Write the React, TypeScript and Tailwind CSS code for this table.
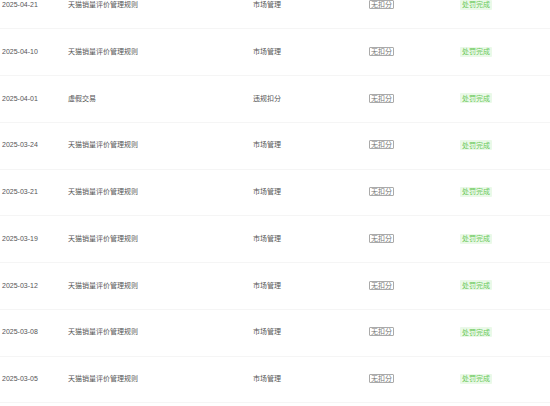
import React from "react"

const rows = [
  { date: "2025-04-21", rule: "天猫销量评价管理规则", type: "市场管理" },
  { date: "2025-04-10", rule: "天猫销量评价管理规则", type: "市场管理" },
  { date: "2025-04-01", rule: "虚假交易", type: "违规扣分" },
  { date: "2025-03-24", rule: "天猫销量评价管理规则", type: "市场管理" },
  { date: "2025-03-21", rule: "天猫销量评价管理规则", type: "市场管理" },
  { date: "2025-03-19", rule: "天猫销量评价管理规则", type: "市场管理" },
  { date: "2025-03-12", rule: "天猫销量评价管理规则", type: "市场管理" },
  { date: "2025-03-08", rule: "天猫销量评价管理规则", type: "市场管理" },
  { date: "2025-03-05", rule: "天猫销量评价管理规则", type: "市场管理" },
]

export default function App() {
  return (
    <div
      className="w-[550px] h-[406px] overflow-hidden bg-white text-[7px] text-[#555]"
      style={{ fontFamily: '"Liberation Sans", "Noto Sans CJK SC", sans-serif' }}
    >
      <div className="-mt-[17.4px]">
        {rows.map((r, i) => (
          <div
            key={i}
            className="flex items-center h-[46.75px] border-b border-[#f5f5f5]"
          >
            <div className="w-[68px] pl-[2px]">{r.date}</div>
            <div className="w-[185px]">{r.rule}</div>
            <div className="w-[116px]">{r.type}</div>
            <div className="w-[91px]">
              <span className="inline-flex items-center h-[9px] px-[1px] border border-[#aaa] rounded-[1px] text-[#777] leading-none">
                无扣分
              </span>
            </div>
            <div>
              <span className="inline-flex items-center h-[10px] px-[2px] bg-[#eaf9e8] text-[#6cc95a] rounded-[1px] leading-none">
                处罚完成
              </span>
            </div>
          </div>
        ))}
      </div>
    </div>
  )
}
